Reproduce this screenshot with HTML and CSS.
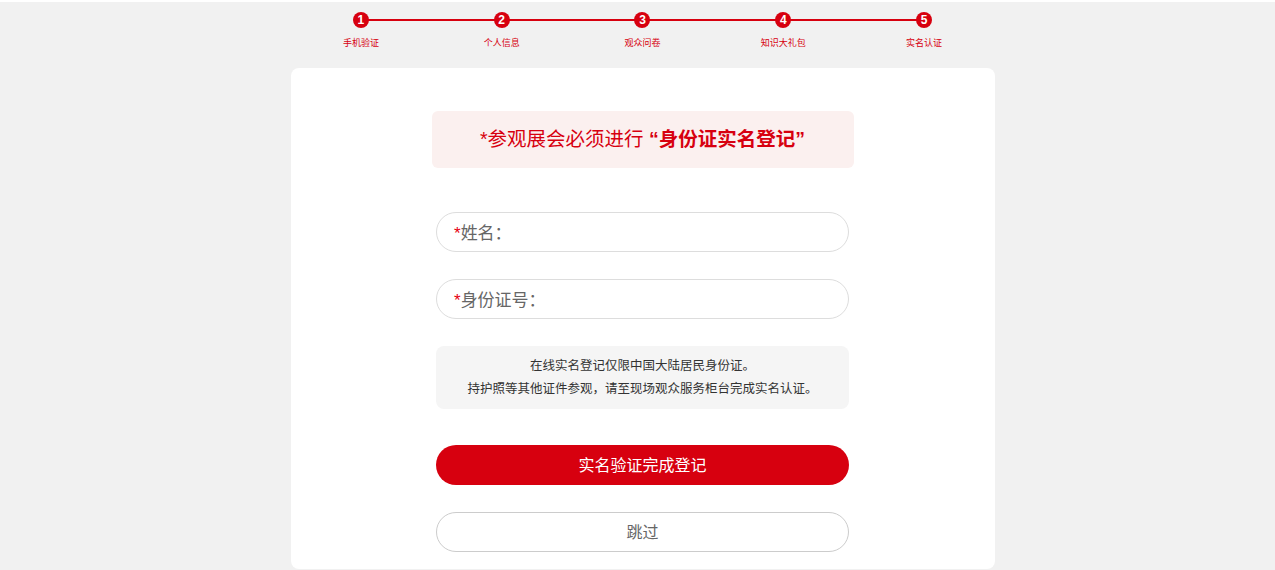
FILE: index.html
```html
<!DOCTYPE html>
<html lang="zh-CN">
<head>
    <meta charset="UTF-8">
    <meta name="viewport" content="width=device-width, initial-scale=1.0">
    <title>实名认证</title>
    <link rel="stylesheet" href="styles.css">
</head>
<body>
    <div class="steps">
        <div class="step"><span class="step-num">1</span><span class="step-label">手机验证</span></div>
        <div class="step"><span class="step-num">2</span><span class="step-label">个人信息</span></div>
        <div class="step"><span class="step-num">3</span><span class="step-label">观众问卷</span></div>
        <div class="step"><span class="step-num">4</span><span class="step-label">知识大礼包</span></div>
        <div class="step"><span class="step-num">5</span><span class="step-label">实名认证</span></div>
    </div>
    <div class="card">
        <div class="banner">*参观展会必须进行 <b>“身份证实名登记”</b></div>
        <label class="field">
            <span class="field-label"><i>*</i>姓名：</span>
            <input type="text">
        </label>
        <label class="field">
            <span class="field-label"><i>*</i>身份证号：</span>
            <input type="text">
        </label>
        <div class="notice">
            <p>在线实名登记仅限中国大陆居民身份证。</p>
            <p>持护照等其他证件参观，请至现场观众服务柜台完成实名认证。</p>
        </div>
        <button class="btn-submit">实名验证完成登记</button>
        <button class="btn-skip">跳过</button>
    </div>
</body>
</html>
```

FILE: styles.css
```css
body {
    margin: 0;
    padding: 0 0 0 10px;
    border-top: 2px solid #fff;
    background-color: #f1f1f1;
    font-family: "Liberation Sans", "Noto Sans CJK SC", sans-serif;
}
.steps {
    position: relative;
    display: grid;
    grid-template-columns: repeat(5, 1fr);
    width: 704px;
    margin: 0 auto;
}
.steps::before {
    content: "";
    position: absolute;
    left: 10%;
    right: 10%;
    top: 17px;
    height: 2px;
    background-color: #d7000f;
}
.step {
    position: relative;
    display: flex;
    flex-direction: column;
    align-items: center;
    padding-top: 10px;
}
.step-num {
    width: 16px;
    height: 16px;
    line-height: 16px;
    border-radius: 50%;
    background-color: #d7000f;
    color: #fff;
    font-size: 12px;
    font-weight: bold;
    text-align: center;
}
.step-label {
    margin-top: 9px;
    font-size: 9px;
    line-height: 12px;
    color: #d7000f;
}
.card {
    display: flex;
    flex-direction: column;
    align-items: center;
    width: 704px;
    margin: 19px auto 0;
    padding: 43px 0 17px;
    box-sizing: border-box;
    background-color: #fff;
    border-radius: 8px;
}
.banner {
    width: 422px;
    height: 57px;
    line-height: 57px;
    margin-bottom: 44px;
    background-color: #fbf0ef;
    border-radius: 6px;
    color: #d7000f;
    font-size: 19.5px;
    text-align: center;
}
.field {
    display: flex;
    align-items: center;
    width: 413px;
    height: 40px;
    margin-bottom: 27px;
    padding: 0 17px 2px;
    box-sizing: border-box;
    border: 1px solid #ddd;
    border-radius: 20px;
}
.field-label {
    font-size: 17px;
    color: #666;
    white-space: nowrap;
}
.field-label i {
    font-style: normal;
    color: #e60012;
}
.field input {
    flex: 1;
    min-width: 0;
    border: none;
    outline: none;
    font-size: 16px;
    background: transparent;
}
.notice {
    width: 413px;
    height: 63px;
    padding-top: 9px;
    box-sizing: border-box;
    margin-bottom: 36px;
    background-color: #f5f5f5;
    border-radius: 8px;
    text-align: center;
    font-size: 12.5px;
    line-height: 23px;
    color: #333;
}
.notice p {
    margin: 0;
}
.btn-submit, .btn-skip {
    width: 413px;
    height: 40px;
    padding: 0 0 3px;
    border-radius: 20px;
    font-family: inherit;
    font-size: 16px;
    cursor: pointer;
}
.btn-submit {
    margin-bottom: 27px;
    border: none;
    background-color: #d7000f;
    color: #fff;
}
.btn-skip {
    border: 1px solid #ccc;
    background-color: #fff;
    color: #666;
}
```
